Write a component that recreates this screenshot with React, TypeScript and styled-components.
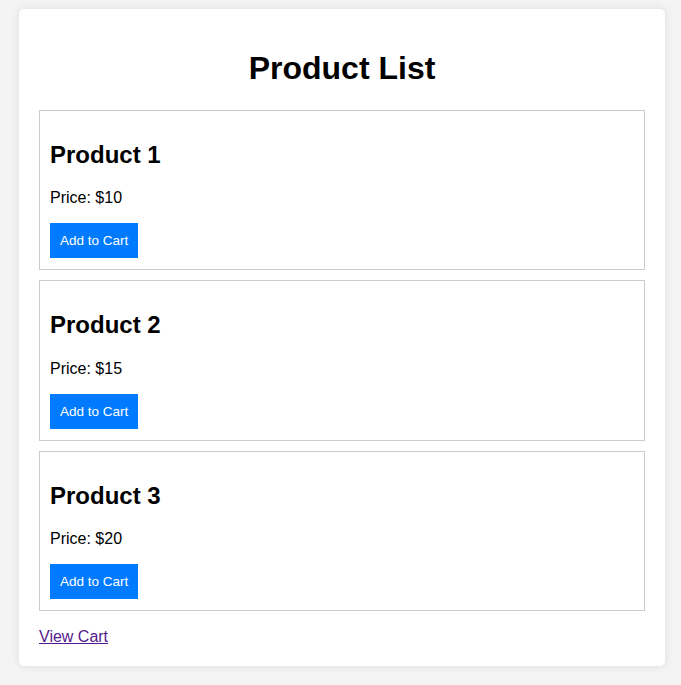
import React from 'react';
import styled, { createGlobalStyle } from 'styled-components';

const GlobalStyle = createGlobalStyle`
  body {
    margin: 0;
    padding: 9px 16px 18px 19px;
    background: #f4f4f4;
    font-family: "Liberation Sans", Arial, sans-serif;
  }
`;

const Container = styled.div`
  background: white;
  padding: 20px;
  border-radius: 5px;
  box-shadow: 0 0 10px rgba(0, 0, 0, 0.1);
`;

const Title = styled.h1`
  text-align: center;
  font-size: 32px;
  margin: 21.44px 0 22.44px;
`;

const Card = styled.div`
  border: 1px solid #ccc;
  padding: 10px 10px 11px;
  margin-bottom: 10px;
`;

const Name = styled.h2`
  font-size: 24px;
  line-height: 28.6px;
  margin: 19.92px 0;
`;

const Price = styled.p`
  font-size: 16px;
  margin: 16px 0;
`;

const AddButton = styled.button`
  background: #007bff;
  color: white;
  border: none;
  padding: 10px;
  font-family: "Liberation Sans", Arial, sans-serif;
  font-size: 13.5px;
  cursor: pointer;
`;

const CartLink = styled.a`
  display: inline-block;
  margin-top: 7px;
  color: #551a8b;
  font-size: 16px;
  text-decoration: underline;
`;

const products = [
  { id: 1, name: 'Product 1', price: 10 },
  { id: 2, name: 'Product 2', price: 15 },
  { id: 3, name: 'Product 3', price: 20 },
];

export default function App() {
  return (
    <>
      <GlobalStyle />
      <Container>
        <Title>Product List</Title>
        {products.map((p) => (
          <Card key={p.id}>
            <Name>{p.name}</Name>
            <Price>Price: ${p.price}</Price>
            <AddButton>Add to Cart</AddButton>
          </Card>
        ))}
        <CartLink href="#cart">View Cart</CartLink>
      </Container>
    </>
  );
}
